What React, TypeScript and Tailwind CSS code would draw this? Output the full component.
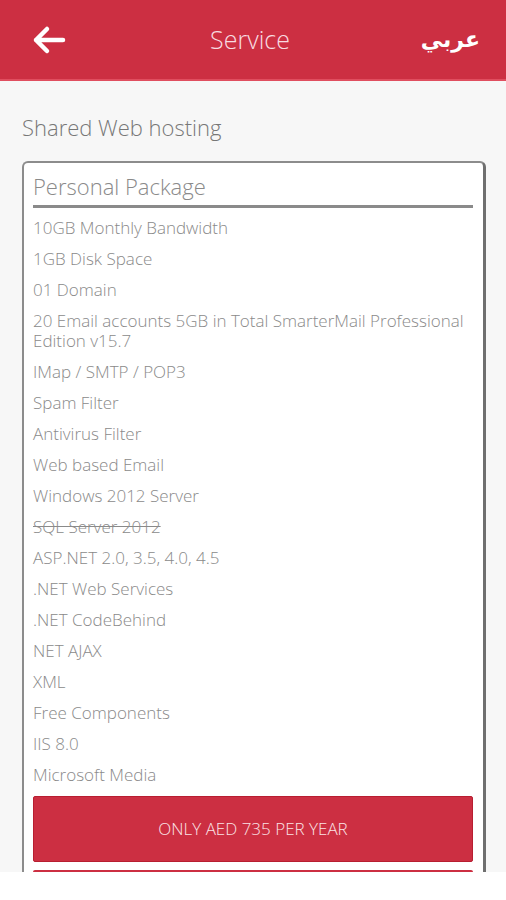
const FEATURES: { text: string; struck?: boolean }[] = [
  { text: "10GB Monthly Bandwidth" },
  { text: "1GB Disk Space" },
  { text: "01 Domain" },
  { text: "20 Email accounts 5GB in Total SmarterMail Professional Edition v15.7" },
  { text: "IMap / SMTP / POP3" },
  { text: "Spam Filter" },
  { text: "Antivirus Filter" },
  { text: "Web based Email" },
  { text: "Windows 2012 Server" },
  { text: "SQL Server 2012", struck: true },
  { text: "ASP.NET 2.0, 3.5, 4.0, 4.5" },
  { text: ".NET Web Services" },
  { text: ".NET CodeBehind" },
  { text: "NET AJAX" },
  { text: "XML" },
  { text: "Free Components" },
  { text: "IIS 8.0" },
  { text: "Microsoft Media" },
];

function BackArrow() {
  return (
    <svg width="34" height="30" viewBox="0 0 34 30" fill="none">
      <path d="M31 15H4M15 4L4 15l11 11" stroke="white" strokeWidth="4.5" strokeLinecap="round" strokeLinejoin="round" />
    </svg>
  );
}

export default function App() {
  return (
    <div className="flex h-[900px] w-[506px] flex-col bg-white font-['Open_Sans',sans-serif]">
      <div className="flex h-[872px] flex-col overflow-hidden bg-[#f7f7f7]">
        <header className="grid h-[81px] shrink-0 grid-cols-[1fr_auto_1fr] items-center border-b-2 border-[#e04e5f] bg-[#cc2f42] pl-[32px] pr-[26px]">
          <BackArrow />
          <h1 className="pr-[12px] text-[25px] font-light text-[#f8dbe0]">Service</h1>
          <span
            dir="rtl"
            className="justify-self-end font-['DejaVu_Sans',sans-serif] text-[22px] font-bold leading-none tracking-tight text-white"
          >
            عربي
          </span>
        </header>

        <main className="pl-[22px] pr-[20px] pt-[31px]">
          <h2 className="text-[22px] font-light leading-[30px] text-[#777]">Shared Web hosting</h2>

          <section className="mt-[19px] rounded-[6px] border-2 border-[#8c8c8c] border-r-[3px] border-r-[#6f6f6f] bg-white pb-[10px] pl-[9px] pr-[10px] pt-[8px]">
            <h3 className="border-b-[3px] border-[#8a8a8a] pb-[4px] text-[22px] font-light leading-[30px] text-[#8a8a8a]">
              Personal Package
            </h3>
            <ul className="pt-[10px]">
              {FEATURES.map((f) => (
                <li
                  key={f.text}
                  className={
                    "mb-[11px] text-[17px] font-light leading-[20px] text-[#8a8a8a]" +
                    (f.struck ? " line-through" : "")
                  }
                >
                  {f.text}
                </li>
              ))}
            </ul>
            <button className="flex h-[66px] w-full items-center justify-center rounded-[2px] border border-[#b81e31] bg-[#cc2f42] text-[17px] font-light text-[#fbe3e6]">
              ONLY AED 735 PER YEAR
            </button>
            <div className="mt-[8px] h-[66px] w-full rounded-[2px] bg-[#cc2f42]" />
          </section>
        </main>
      </div>
    </div>
  );
}
